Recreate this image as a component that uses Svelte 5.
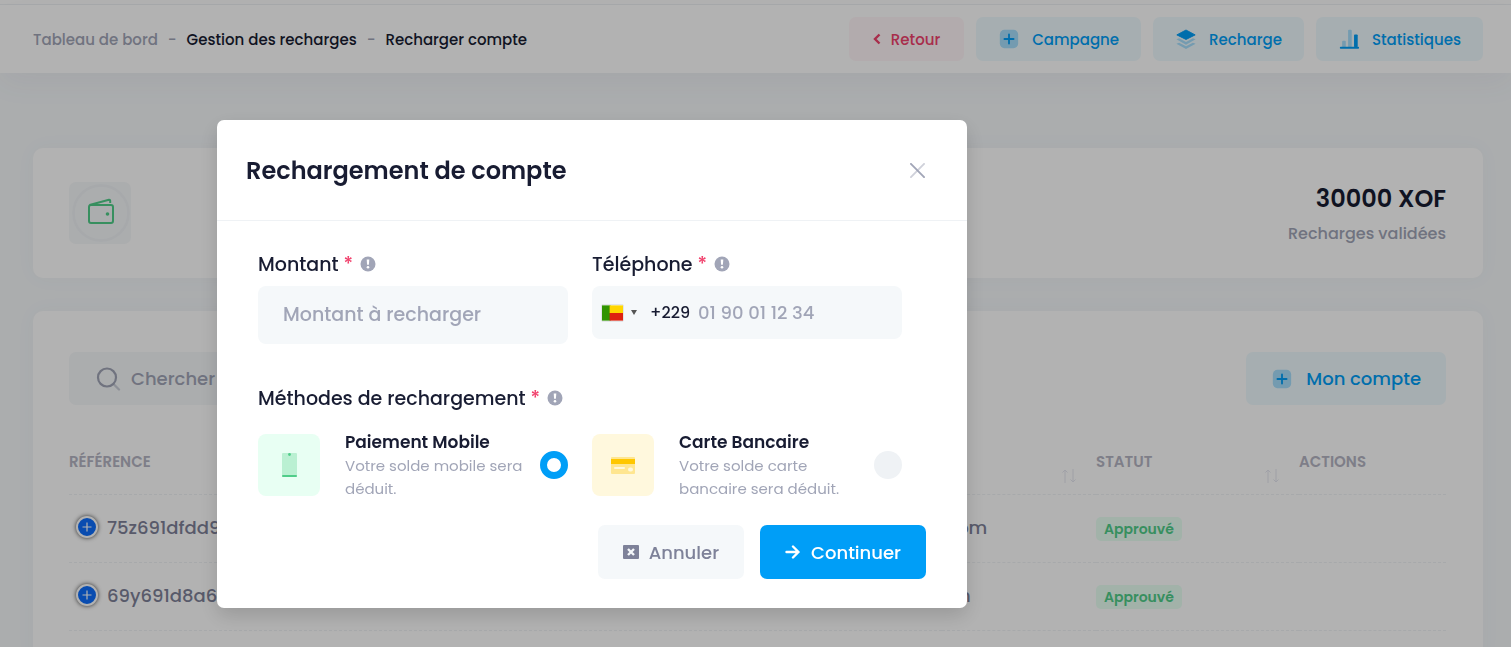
<script>
  const rows = [
    { ref: '75z691dfdd9', domain: '.com', status: 'Approuvé' },
    { ref: '69y691d8a64', domain: 'bin', status: 'Approuvé' }
  ];
  const methods = [
    { id: 'mobile', title: 'Paiement Mobile', text: 'Votre solde mobile sera déduit.' },
    { id: 'card', title: 'Carte Bancaire', text: 'Votre solde carte bancaire sera déduit.' }
  ];
  let method = $state('mobile');
  let amount = $state('');
  let phone = $state('');
</script>

{#snippet plusSquare()}
  <svg class="ico" viewBox="0 0 24 24" aria-hidden="true">
    <rect x="2" y="2" width="20" height="20" rx="5" fill="currentColor" opacity=".3" />
    <rect x="6" y="11" width="12" height="2" rx="1" fill="currentColor" />
    <rect x="11" y="6" width="2" height="12" rx="1" fill="currentColor" />
  </svg>
{/snippet}

{#snippet info()}
  <svg class="info" viewBox="0 0 16 16" aria-hidden="true">
    <circle cx="8" cy="8" r="7.5" fill="#a1a5b7" />
    <path d="M6.7 3.6h2.600l-.4 5.2H7.1z" fill="#fff" />
    <circle cx="8" cy="11.2" r="1.3" fill="#fff" />
  </svg>
{/snippet}

{#snippet sort()}
  <svg class="sort" viewBox="0 0 16 16" aria-hidden="true">
    <path d="M4 15V2M1.500 4.500L4 2l2.500 2.500M12 1v13M9.500 11.500L12 14l2.500-2.500" fill="none" stroke="currentColor" stroke-width="1" />
  </svg>
{/snippet}

<div class="page">
  <div class="strip"></div>
  <header class="toolbar">
    <nav class="crumbs" aria-label="Fil d'Ariane">
      <a class="muted" href="#accueil">Tableau de bord</a>
      <span class="muted">-</span>
      <a href="#recharges">Gestion des recharges</a>
      <span class="muted">-</span>
      <span>Recharger compte</span>
    </nav>
    <div class="actions">
      <button class="btn danger" type="button">
        <svg class="chev" viewBox="0 0 8 12" aria-hidden="true"><path d="M6.500 1.500L2 6l4.500 4.500" fill="none" stroke="currentColor" stroke-width="2.400" /></svg>
        Retour
      </button>
      <button class="btn primary" type="button">{@render plusSquare()}Campagne</button>
      <button class="btn primary" type="button">
        <svg class="ico" viewBox="0 0 24 24" aria-hidden="true">
          <path d="M12 2.200L22 7.500 12 12.500 2 7.500z" fill="currentColor" stroke="currentColor" stroke-linejoin="round" />
          <path d="M1.500 12.300L4.500 11.200 12 15.200l7.500-4L22.500 12.300 12 18.300z" fill="currentColor" opacity=".3" />
          <path d="M1.500 17.300L4.500 16 12 20l7.500-4L22.500 17.300 12 23z" fill="currentColor" opacity=".3" />
        </svg>
        Recharge
      </button>
      <button class="btn primary" type="button">
        <svg class="ico" viewBox="0 0 24 24" aria-hidden="true">
          <rect x="4.500" y="14" width="4" height="7" rx="1" fill="currentColor" opacity=".3" />
          <rect x="11" y="2" width="4" height="19" rx="1" fill="currentColor" opacity=".3" />
          <rect x="17.500" y="7" width="4" height="14" rx="1" fill="currentColor" />
          <rect x="2" y="20.500" width="21" height="2" rx="1" fill="currentColor" />
        </svg>
        Statistiques
      </button>
    </div>
  </header>

  <main class="content">
    <section class="card summary">
      <div class="symbol">
        <svg viewBox="0 0 62 62" aria-hidden="true">
          <circle cx="32" cy="31" r="27.500" fill="none" stroke="#eff2f5" stroke-width="2.500" />
          <g fill="none" stroke="#50cd89" stroke-width="2" stroke-linejoin="round">
            <rect x="20" y="23" width="24" height="18" rx="2" />
            <path d="M20.500 23L40 17.800q1.200-.2 1.200 1.200V21" />
          </g>
          <circle cx="38.500" cy="32" r="1.800" fill="#50cd89" />
        </svg>
      </div>
      <div class="total">
        <strong>30000 XOF</strong>
        <span>Recharges validées</span>
      </div>
    </section>

    <section class="card list">
      <div class="tools">
        <label class="search">
          <svg viewBox="0 0 26 26" aria-hidden="true">
            <circle cx="12" cy="11.500" r="9" fill="none" stroke="#a1a5b7" stroke-width="2.200" />
            <path d="M19 18.500L24 23.500" stroke="#a1a5b7" stroke-width="2.200" opacity=".5" stroke-linecap="round" />
          </svg>
          <input type="search" placeholder="Chercher" aria-label="Chercher" />
        </label>
        <button class="btn primary large" type="button">{@render plusSquare()}Mon compte</button>
      </div>
      <table>
        <colgroup><col /><col class="c-mail" /><col class="c-status" /><col class="c-actions" /></colgroup>
        <thead>
          <tr>
            <th>Référence</th>
            <th><span class="th end">{@render sort()}</span></th>
            <th><span class="th">Statut{@render sort()}</span></th>
            <th>Actions</th>
          </tr>
        </thead>
        <tbody>
          {#each rows as row}
            <tr>
              <td>
                <span class="ref">
                  <button class="expand" type="button" aria-label="Détails">
                    <svg viewBox="0 0 10 10" aria-hidden="true"><path d="M5 .5v9M.5 5h9" stroke="#fff" stroke-width="1.200" /></svg>
                  </button>
                  {row.ref}
                </span>
              </td>
              <td>{row.domain}</td>
              <td><span class="badge">{row.status}</span></td>
              <td></td>
            </tr>
          {/each}
        </tbody>
      </table>
    </section>
  </main>
</div>

<div class="overlay">
  <div class="modal" role="dialog" aria-modal="true" aria-labelledby="modal-title">
    <div class="modal-head">
      <h2 id="modal-title">Rechargement de compte</h2>
      <button class="close" type="button" aria-label="Fermer">
        <svg viewBox="0 0 16 16" aria-hidden="true">
          <path d="M15 1L1 15" stroke="#a1a5b7" stroke-width="2" opacity=".5" stroke-linecap="round" />
          <path d="M1 1l14 14" stroke="#a1a5b7" stroke-width="2" stroke-linecap="round" />
        </svg>
      </button>
    </div>
    <form class="modal-body" onsubmit={(e) => e.preventDefault()}>
      <div class="grid fields">
        <div class="field">
          <label for="amount">Montant <span class="req">*</span>{@render info()}</label>
          <input id="amount" class="control amount" type="text" placeholder="Montant à recharger" bind:value={amount} />
        </div>
        <div class="field">
          <label for="phone">Téléphone <span class="req">*</span>{@render info()}</label>
          <div class="control phone">
            <button class="country" type="button" aria-label="Bénin">
              <svg class="flag" viewBox="0 0 22 16" aria-hidden="true">
                <path d="M0 0h9v16H0z" fill="#319400" />
                <path d="M8 0h14v8H8z" fill="#ffd600" />
                <path d="M8 8h14v8H8z" fill="#de2110" />
              </svg>
              <svg class="caret" viewBox="0 0 6 5" aria-hidden="true"><path d="M0 0h6L3 5z" fill="#555" /></svg>
              <span>+229</span>
            </button>
            <input id="phone" type="tel" placeholder="01 90 01 12 34" bind:value={phone} />
          </div>
        </div>
      </div>

      <fieldset>
        <legend>Méthodes de rechargement <span class="req">*</span>{@render info()}</legend>
        <div class="grid">
          {#each methods as m}
            <label class="option" for={m.id}>
              <span class="tile {m.id}">
                {#if m.id === 'mobile'}
                  <svg viewBox="0 0 30 30" aria-hidden="true">
                    <rect x="8" y="3" width="15" height="24" rx="1" fill="#50cd89" opacity=".3" />
                    <rect x="8" y="25" width="15" height="2" rx="1" fill="#50cd89" />
                    <circle cx="15.500" cy="4.500" r="1.400" fill="#50cd89" />
                  </svg>
                {:else}
                  <svg viewBox="0 0 30 30" aria-hidden="true">
                    <rect x="3" y="7" width="24" height="17" rx="1" fill="#ffc700" opacity=".35" />
                    <rect x="3" y="9" width="24" height="5" fill="#ffc700" />
                    <rect x="6" y="17" width="11" height="2" rx="1" fill="#fff8dd" />
                    <rect x="20" y="17.500" width="5" height="4" rx="2" fill="#fff8dd" />
                  </svg>
                {/if}
              </span>
              <span class="desc"><strong>{m.title}</strong><span>{m.text}</span></span>
              <input id={m.id} type="radio" name="method" value={m.id} bind:group={method} />
            </label>
          {/each}
        </div>
      </fieldset>

      <div class="footer">
        <button class="btn large cancel" type="button">
          <svg class="glyph" viewBox="0 0 16 14" aria-hidden="true">
            <rect width="16" height="14" rx="1" fill="currentColor" />
            <path d="M5 4l6 6M11 4l-6 6" stroke="#f5f8fa" stroke-width="2.400" />
          </svg>
          Annuler
        </button>
        <button class="btn large submit" type="submit">
          <svg class="glyph" viewBox="0 0 16 14" aria-hidden="true">
            <path d="M1.500 7h12M8 1.500L13.500 7 8 12.500" fill="none" stroke="currentColor" stroke-width="2.400" stroke-linecap="round" stroke-linejoin="round" />
          </svg>
          Continuer
        </button>
      </div>
    </form>
  </div>
</div>

<style>
  :global(body) {
    background: #f5f8fa;
    color: #181c32;
    font-family: Poppins, Inter, sans-serif;
    font-size: 15px;
    font-weight: 500;
  }
  * { box-sizing: border-box; }
  button, input { font: inherit; color: inherit; }
  button { border: 0; cursor: pointer; }
  a { color: inherit; text-decoration: none; }
  svg { flex: none; display: block; }

  .page { height: 100vh; overflow: hidden; display: flex; flex-direction: column; }
  .strip { flex: none; height: 5px; background: #fff; border-bottom: 1px solid #eff2f5; }
  .toolbar {
    flex: none;
    display: flex;
    align-items: center;
    justify-content: space-between;
    height: 68px;
    padding: 0 28px 0 33px;
    background: #fff;
    box-shadow: 0 10px 30px rgba(82, 63, 105, .05);
  }
  .crumbs { display: flex; gap: 10px; white-space: nowrap; }
  .muted { color: #a1a5b7; }
  .actions { display: flex; gap: 12px; }

  .btn {
    display: inline-flex;
    align-items: center;
    justify-content: center;
    gap: 12px;
    height: 44px;
    padding: 0 22px;
    border-radius: 7px;
    white-space: nowrap;
  }
  .ico { width: 22px; height: 22px; }
  .primary { background: #eefafe; color: #009ef7; }
  .danger { background: #fff5f8; color: #f1416c; padding: 0 24px; gap: 10px; }
  .chev { width: 8px; height: 12px; }
  .large { height: 53px; padding: 0 25px; font-size: 18px; gap: 13px; }

  .content {
    flex: 1;
    display: flex;
    flex-direction: column;
    gap: 33px;
    padding: 75px 28px 0 33px;
  }
  .card { background: #fff; border-radius: 10px; box-shadow: 0 0 20px rgba(76, 87, 125, .04); }
  .summary {
    flex: none;
    display: flex;
    align-items: center;
    justify-content: space-between;
    height: 130px;
    padding: 0 37px 0 36px;
  }
  .symbol { width: 62px; height: 62px; border-radius: 7px; background: #f5f8fa; }
  .total { display: flex; flex-direction: column; align-items: flex-end; padding-top: 4px; gap: 4px; }
  .total strong { font-size: 24px; line-height: 34px; font-weight: 600; }
  .total span { font-size: 16px; line-height: 28px; color: #a1a5b7; }

  .list { flex: 1 0 auto; padding: 41px 37px 32px 36px; }
  .tools { display: flex; justify-content: space-between; }
  .search {
    display: flex;
    align-items: center;
    gap: 10px;
    width: 320px;
    height: 53px;
    padding: 0 26px;
    border-radius: 7px;
    background: #f5f8fa;
  }
  .search svg { width: 26px; height: 26px; }
  .search input { flex: 1; min-width: 0; padding: 0; border: 0; outline: 0; background: none; font-size: 18px; }
  input::placeholder { color: #a1a5b7; opacity: 1; }

  table { width: 100%; margin-top: 24px; border-collapse: collapse; table-layout: fixed; color: #7e8299; }
  .c-mail { width: 154px; }
  .c-status { width: 203px; }
  .c-actions { width: 147px; }
  th, td { padding: 0; text-align: left; border-bottom: 1px dashed #eff2f5; }
  th {
    height: 65px;
    color: #b5b5c3;
    font-size: 15px;
    font-weight: 600;
    text-transform: uppercase;
  }
  .th { display: flex; align-items: flex-start; justify-content: space-between; height: 22px; padding-right: 19px; }
  .th.end { justify-content: flex-end; }
  .sort { width: 16px; height: 16px; margin-top: 18px; color: #e4e6ef; }
  td { height: 68px; padding-bottom: 2px; font-size: 18px; }
  .ref { display: flex; align-items: center; gap: 9px; padding-left: 7px; }
  .expand {
    display: grid;
    place-items: center;
    width: 22px;
    height: 22px;
    padding: 0;
    border: 2px solid #fff;
    border-radius: 50%;
    background: #0d6efd;
    box-shadow: 0 0 4px #444;
  }
  .expand svg { width: 10px; height: 10px; }
  .badge {
    display: inline-block;
    padding: 0 8px;
    border-radius: 5px;
    background: #e8fff3;
    color: #50cd89;
    font-size: 14px;
    line-height: 24px;
    font-weight: 600;
  }

  .overlay {
    position: fixed;
    inset: 0;
    display: flex;
    align-items: flex-start;
    justify-content: center;
    padding: 120px 327px 0 0;
    background: rgba(0, 0, 0, .3);
  }
  .modal {
    width: 100%;
    max-width: 750px;
    border-radius: 7px;
    background: #fff;
    box-shadow: 0 8px 20px rgba(0, 0, 0, .15);
  }
  .modal-head {
    display: flex;
    align-items: center;
    justify-content: space-between;
    height: 101px;
    padding: 0 34px 0 29px;
    border-bottom: 1px solid #eff2f5;
  }
  h2 { margin: 0; font-size: 24px; font-weight: 600; }
  .close { padding: 8px; background: none; }
  .close svg { width: 15px; height: 15px; }

  .modal-body { padding: 28px 41px 29px; }
  .grid { display: grid; grid-template-columns: repeat(2, minmax(0, 1fr)); gap: 24px; padding-right: 24px; }
  .fields { align-items: start; }
  .field label, legend {
    display: flex;
    align-items: center;
    height: 30px;
    font-size: 19px;
    white-space: pre;
  }
  .field label { margin-bottom: 7px; }
  .req { color: #f1416c; }
  .info { width: 16px; height: 16px; margin-left: 7px; }
  .control { width: 100%; border: 0; border-radius: 8px; outline: 0; background: #f5f8fa; font-size: 18px; }
  .amount { display: block; height: 58px; padding: 0 25px 2px; font-size: 19px; }
  .phone { display: flex; align-items: center; height: 53px; padding: 0 10px; }
  .country { display: flex; align-items: center; padding: 0; background: none; font-size: 16px; }
  .flag { width: 21px; height: 16px; box-shadow: 0 0 1px #888; }
  .caret { width: 6px; height: 5px; margin: 0 13px 0 8px; }
  .phone input { flex: 1; min-width: 0; padding: 0 0 0 8px; border: 0; outline: 0; background: none; }

  fieldset { min-width: 0; margin: 39px 0 0; padding: 0; border: 0; }
  legend { width: 100%; padding: 0; margin-bottom: 19px; }
  .option { display: flex; align-items: center; height: 66px; cursor: pointer; }
  .tile { flex: none; display: grid; place-items: center; width: 62px; height: 62px; border-radius: 8px; }
  .tile svg { width: 30px; height: 30px; }
  .tile.mobile { background: #e8fff3; }
  .tile.card { background: #fff8dd; box-shadow: none; }
  .desc { flex: 1; min-width: 0; padding-left: 25px; }
  .desc strong { display: block; font-size: 17px; line-height: 24px; font-weight: 600; }
  .desc span { display: block; max-width: 190px; color: #a1a5b7; font-size: 15px; line-height: 23px; font-weight: 400; }
  input[type='radio'] {
    appearance: none;
    flex: none;
    width: 28px;
    height: 28px;
    margin: 0;
    border-radius: 50%;
    background: #eff2f5;
    cursor: pointer;
  }
  input[type='radio']:checked { border: 7px solid #009ef7; background: #fff; }

  .footer { display: flex; justify-content: flex-end; gap: 16px; margin-top: 27px; }
  .glyph { width: 16px; height: 14px; }
  .footer .btn { height: 54px; gap: 10px; }
  .cancel { background: #f5f8fa; color: #7e8299; }
  .submit { background: #009ef7; color: #fff; }
</style>
